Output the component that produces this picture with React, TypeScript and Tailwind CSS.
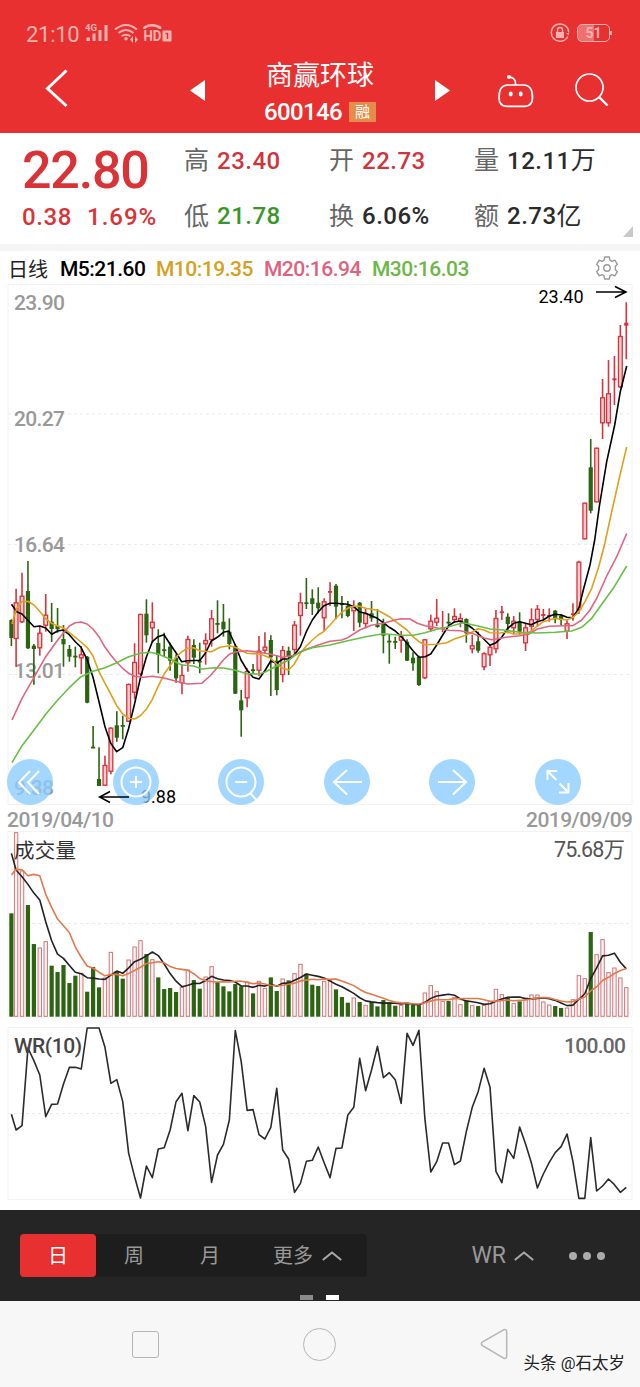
import React from 'react';

type Tone = 'r' | 'g';
type Candle = [tone: Tone, high: number, low: number, top: number, bottom: number];
type Point = [number, number];

const UP = '#d6333c';
const DOWN = '#2c6412';

const candles: Candle[] = [
  ['g', 619.3, 646, 620, 638], ['r', 588.7, 666.7, 602.3, 639], ['r', 572.7, 623, 595.7, 622.3],
  ['g', 561, 649, 591, 648.3], ['g', 644, 684.7, 645.7, 649], ['r', 627, 655.7, 632.7, 648.3],
  ['r', 594, 631.7, 614.7, 625.7], ['g', 603, 642, 621.7, 629], ['g', 608, 632.7, 626, 629.3],
  ['g', 625, 666.7, 639, 644.3], ['g', 645, 661.7, 649, 656.7], ['g', 646.7, 667.3, 655.7, 657],
  ['r', 646, 674, 654.3, 658.3], ['g', 656, 703.3, 656.7, 702.7], ['g', 726, 748, 746.7, 748],
  ['g', 747.3, 786, 779, 786], ['r', 755.7, 786, 765, 785.7], ['r', 727.3, 774.3, 727.7, 771.7],
  ['g', 711.3, 741.7, 725.3, 737.7], ['g', 715.7, 739.3, 725, 726.3], ['r', 683.5, 722, 684, 721.7],
  ['r', 643.3, 699.3, 662, 692.7], ['r', 613.7, 675, 614, 674.3], ['g', 599.3, 642.7, 613.7, 635.3],
  ['r', 602.3, 642.7, 621.7, 628.3], ['g', 629.3, 673.3, 643, 655], ['g', 632.7, 656, 649.3, 650.7],
  ['g', 642.7, 670.7, 646.7, 660.7], ['g', 654.3, 682.7, 657.7, 678.3], ['r', 664, 694.3, 675, 683.3],
  ['r', 635.7, 671.7, 639, 663.3], ['g', 639.3, 664, 645, 657.7], ['g', 642.7, 673.3, 660.7, 662.3],
  ['r', 633.3, 664.7, 640, 644.3], ['r', 610, 646.7, 618.3, 640], ['g', 600.3, 633.3, 623, 624.3],
  ['g', 604, 636.7, 621.7, 629.3], ['g', 618.3, 649.3, 631.7, 644], ['g', 644, 694, 646, 693.7],
  ['g', 690, 736.7, 700.3, 710.3], ['r', 668.3, 707.3, 671, 698.3], ['g', 664, 673.3, 669.3, 670.7],
  ['r', 636, 676, 650.7, 670.7], ['r', 632.3, 653.3, 646.7, 650.7], ['g', 635.3, 696, 640, 657.3],
  ['g', 655, 695.3, 660.7, 690], ['r', 646, 682.3, 650, 675], ['g', 646.7, 675, 650.7, 656.7],
  ['r', 621, 655, 624.7, 650], ['r', 592.7, 635.7, 602.3, 616], ['g', 578, 609, 602.3, 604],
  ['g', 589.3, 615, 598.3, 604], ['g', 587.3, 613.3, 602.7, 608.3], ['r', 598.3, 630.7, 601.3, 618.3],
  ['r', 582.3, 606, 591, 592.3], ['g', 584, 619.3, 585.7, 606.7], ['g', 596, 618.3, 603.3, 604.7],
  ['g', 601, 617.3, 605.7, 616], ['r', 600.3, 631, 606, 611.3], ['g', 602, 627.3, 602.7, 622.7],
  ['r', 608.3, 628.3, 613.3, 624], ['g', 601, 621.7, 613.3, 618.3], ['g', 609, 627.7, 625, 627],
  ['g', 618.7, 653.3, 623.3, 635.7], ['g', 634, 663.7, 640.7, 642], ['g', 636.7, 649, 641, 642.7],
  ['r', 631, 652.7, 636.3, 640.7], ['g', 639.3, 661, 641.7, 660.7], ['g', 652.3, 670.7, 657.7, 663.3],
  ['g', 655.7, 686, 656.7, 685], ['r', 639, 679, 639.3, 678.3], ['r', 614.7, 631.7, 620.7, 629.3],
  ['r', 599, 626, 617.7, 622.7], ['r', 611, 632.3, 627.3, 629], ['g', 613.3, 626.7, 621.7, 623.3],
  ['r', 608.3, 622.3, 616, 620], ['r', 613.3, 627.3, 618, 621.7], ['g', 618.3, 642.7, 619, 633.3],
  ['r', 635, 653.3, 645.3, 649.3], ['g', 631.7, 652.7, 641.3, 650.7], ['r', 652.3, 670.3, 653.3, 667.3],
  ['r', 645, 666, 646.7, 655.3], ['r', 610, 653.3, 618, 649.3], ['r', 606, 620, 611.3, 613],
  ['g', 613.3, 633.3, 616.7, 624], ['r', 616, 634.3, 620.7, 628.3], ['g', 612.3, 634.7, 621.7, 631.7],
  ['r', 623.3, 651, 627.3, 643.3], ['r', 608.3, 630.7, 619.3, 626.7], ['r', 605, 626.7, 608.7, 620],
  ['r', 609, 621, 614, 616], ['r', 608.3, 621.7, 615, 616.7], ['g', 610, 623.3, 610.7, 619.3],
  ['g', 614, 625.7, 616, 620], ['r', 620, 639, 623.3, 631.7], ['r', 603.3, 620.7, 613.3, 615],
  ['r', 560.7, 614, 561.7, 610], ['r', 502.7, 539.3, 502.7, 539.3], ['g', 439, 513.3, 467.3, 510.7],
  ['r', 447.7, 502.3, 447.7, 502.3], ['r', 379, 439, 397.3, 423.3], ['r', 360, 426.7, 393.3, 423.3],
  ['r', 356, 405, 378.3, 380.3], ['r', 325, 388.3, 336, 387.3], ['r', 302.3, 359.3, 322.7, 325.7],
];

const ma5: Point[] = [
  [11.5, 604.3], [16.7, 611.7], [22, 614], [34, 626.7], [40, 626], [45.7, 628], [51.7, 634.3], [57.7, 631],
  [63.3, 630], [69.3, 634.7], [75.3, 641.7], [81, 647.3], [87, 659.3], [93, 677.3], [99, 701.7], [105, 726.7],
  [110.7, 743.3], [116.7, 751.7], [122.7, 747.7], [128.7, 728.3], [134.7, 703.3], [140.3, 678.3], [146.3, 657.3],
  [152.3, 641.7], [158, 636.7], [164, 634.7], [170, 644], [176, 652.7], [181.7, 661.7], [187.7, 660.7],
  [200, 660.3], [205.3, 653.3], [211.3, 641], [217.3, 637.3], [223.3, 632.3], [228.7, 631], [235.3, 645],
  [241, 660], [247, 670], [253, 677.3], [259, 679], [264.7, 671], [270.7, 661], [276.7, 663.3], [282.7, 659],
  [288.7, 659], [294.3, 655], [300.3, 646.7], [306.3, 631.7], [312.3, 620], [318.3, 611.7], [324, 605.7],
  [330, 603.3], [336, 603.3], [347.7, 604.3], [353.7, 606.7], [359.7, 612], [365.7, 613.3], [371.3, 615.7],
  [377.3, 618.3], [383.3, 622.7], [389.3, 627.3], [395.3, 631], [401, 636.3], [407, 643.3], [413, 650.7],
  [419, 657.3], [425, 656.7], [430.7, 654], [436.7, 645], [442.7, 635], [448.7, 625.7], [454.3, 622],
  [460.3, 621], [466.3, 624], [472, 628], [478, 633.3], [484, 639.3], [490, 645.3], [496, 642.7],
  [501.7, 637.3], [507.7, 628.3], [513.7, 623.3], [519.7, 621.7], [531.3, 624.7], [537.3, 621.7], [543.3, 620],
  [549.3, 616], [555.3, 614.3], [561.3, 615], [567, 617.3], [573, 617.7], [579, 607.7], [583.3, 590],
  [590, 565], [594.7, 540], [599.3, 506.7], [606.7, 461.7], [614.7, 425], [620.3, 391.7], [626.7, 366],
];

const ma10: Point[] = [
  [12, 624], [16.7, 608.3], [22, 601.7], [28, 601.3], [34, 605], [40, 611.7], [45.7, 618.7], [51.7, 623.3],
  [57.7, 626], [63.3, 628], [69.3, 632.7], [75.3, 637.3], [81, 642], [87, 647.3], [93, 656], [99, 671.7],
  [105, 683.3], [110.7, 694], [116.7, 705.7], [122.7, 714], [128.7, 718.3], [134.7, 719], [140.3, 715.7],
  [146.3, 709.3], [152.3, 699.3], [158, 686.7], [164, 674.3], [170, 665.7], [176, 657.3], [181.7, 651.7],
  [187.7, 648.3], [193.7, 647.7], [200, 651], [211.3, 651.7], [220, 647.3], [229.3, 645.7], [235.3, 647.3],
  [241, 650.3], [247, 653.3], [259, 654], [264.7, 655.7], [270.7, 658.3], [276.7, 664.3], [282.7, 668.3],
  [288.7, 670], [294.3, 664], [300.3, 653.3], [306.3, 646], [312.3, 640], [318.3, 635], [324, 631.3],
  [330, 625], [336, 618.3], [341.7, 612.3], [347.7, 608.3], [353.7, 606.3], [359.7, 606.3], [365.7, 608.3],
  [377.3, 610.3], [383.3, 613.3], [389.3, 616.7], [395.3, 621.3], [407, 630], [413, 636.7], [420, 642.3],
  [425, 644.7], [436.7, 644.3], [446.7, 642.7], [454.3, 639], [466.3, 635], [472, 632.3], [478, 628.7],
  [484, 630], [490, 632.7], [500, 633], [507.7, 632], [513.7, 634], [525.7, 633.7], [531.3, 631], [537.3, 626],
  [543.3, 621.7], [549.3, 620], [555.3, 618.3], [561.3, 619.3], [567, 620], [573, 617.3], [579, 611.7],
  [585, 601.7], [591.7, 588.3], [598.3, 568.3], [604.7, 544], [611.7, 511.7], [620, 475], [626.7, 447],
];

const ma20: Point[] = [
  [12, 720], [22, 698.3], [34, 677.3], [45.7, 656.7], [57.7, 640], [69.3, 626], [75.3, 622.7], [81, 622],
  [87, 624], [93, 629], [99, 636.7], [105, 647.3], [110.7, 655], [116.7, 662.3], [122.7, 668.3], [128.7, 673.3],
  [134.7, 676.3], [143.3, 677.3], [152.3, 676.3], [164, 678], [176, 681.3], [187.7, 684], [201.7, 683.3],
  [210, 676], [216.7, 668.3], [223.3, 660], [229.3, 654.3], [235.3, 652], [247, 650.7], [259, 652.3],
  [270.7, 654.3], [282.7, 657.3], [294.3, 655.3], [306.3, 649.3], [318.3, 645], [330, 641.3], [341.7, 640],
  [347.7, 637.7], [359.7, 630], [371.3, 625.3], [383.3, 623.3], [395.3, 620], [401, 618.7], [410, 619],
  [417.3, 623.3], [425, 625.7], [433.3, 627.3], [448.7, 630.3], [460.3, 630.7], [472, 633.3], [484, 638],
  [491.7, 639.7], [507.7, 637], [519.7, 635.7], [528.3, 634.3], [537.3, 629], [549.3, 626.3], [563.3, 625.7],
  [573, 625.7], [581.7, 620], [590, 610], [596.7, 598.3], [606.7, 576], [616.7, 556.7], [626.7, 533.5],
];

const ma30: Point[] = [
  [12, 762.7], [22, 745.7], [34, 730], [45.7, 714.3], [57.7, 700], [69.3, 687.7], [81, 676.7], [93, 671.3],
  [105, 667.7], [116.7, 662.7], [128.7, 656.7], [140.3, 653.3], [150, 652.3], [158, 654], [170, 659],
  [181.7, 665], [193.7, 666], [201.7, 669], [215, 667.7], [223.3, 668], [235.3, 670.3], [247, 673.7],
  [259, 674], [264.7, 672.3], [276.7, 666], [288.7, 660], [300.3, 651.7], [312.3, 647.7], [330, 645],
  [347.7, 640.7], [365.7, 636.7], [383.3, 633.7], [401, 635.3], [413.3, 635.3], [425, 632.7], [436.7, 629.3],
  [448.7, 626.7], [463.3, 622.7], [478, 626], [490, 629], [503.3, 630], [519.7, 632.3], [537.3, 633],
  [555.3, 632.3], [571.7, 631], [581.7, 627.3], [591.7, 618.3], [601.7, 604.3], [613.3, 588.3], [626.7, 566],
];

const volumes = [
  310, 553, 438, 335, 218, 207, 226, 153, 134, 155, 101, 123, 131, 75, 149, 88, 117, 194, 137, 114, 171, 210,
  229, 188, 172, 118, 83, 86, 74, 89, 141, 110, 84, 120, 151, 104, 91, 76, 98, 91, 105, 70, 107, 86, 118, 77,
  114, 109, 130, 158, 129, 96, 92, 107, 110, 82, 59, 42, 57, 44, 35, 44, 31, 50, 43, 33, 35, 40, 35, 34, 72,
  94, 76, 47, 47, 59, 37, 47, 34, 32, 35, 47, 83, 67, 58, 40, 46, 57, 66, 66, 45, 36, 32, 26, 27, 52, 124,
  115, 254, 187, 232, 133, 147, 117, 88,
];

const wr = [
  283, 330, 317, 84, 122, 165, 290, 253, 252, 192, 142, 142, 147, 24, 24, 24, 82, 190, 179, 245, 400, 470, 534,
  438, 473, 387, 383, 330, 245, 220, 332, 227, 246, 320, 487, 405, 373, 300, 32, 125, 271, 269, 344, 357, 322,
  205, 390, 417, 517, 490, 424, 421, 381, 428, 473, 385, 384, 285, 262, 115, 212, 150, 79, 173, 158, 179, 250,
  40, 76, 31, 295, 456, 425, 369, 369, 434, 423, 335, 262, 215, 145, 202, 454, 488, 388, 415, 321, 372, 430,
  504, 462, 427, 398, 380, 342, 425, 535, 535, 353, 513, 498, 477, 494, 517, 502,
];

const xAt = (i: number) => (i === 0 ? 11.4 : 16.1 + (i - 1) * 5.924);

const toPoints = (pts: Point[]) => pts.map((p) => p.join(',')).join(' ');

// first values come from days before the visible range
const average = (n: number, seed: number[]): Point[] =>
  volumes.map((_, i) => {
    const v = i < seed.length ? seed[i] : volumes.slice(i - n + 1, i + 1).reduce((a, b) => a + b, 0) / n;
    return [xAt(i), 1016.7 - v / 3];
  });

const volMa5 = average(5, [490, 440, 420, 397]);
const volMa10 = average(10, [425, 442, 441, 423, 427, 423, 367, 328, 293]);

const Line: React.FC<{ pts: Point[]; color: string; width?: number }> = ({ pts, color, width = 1.6 }) => (
  <polyline points={toPoints(pts)} fill="none" stroke={color} strokeWidth={width} strokeLinejoin="round" />
);

const Grid: React.FC<{ y: number }> = ({ y }) => (
  <line x1="8" x2="632" y1={y} y2={y} stroke="#ebebeb" strokeDasharray="3 3" />
);

const StatusBar = () => (
  <div className="flex h-[54px] items-end justify-between pr-7 pl-[26px] text-[#f9b3b0]">
    <div className="flex h-[42px] items-center">
      <span className="w-[59px] pt-[3px] text-[22px] leading-none tracking-[-0.3px]">21:10</span>
      <svg width="90" height="24" viewBox="85 21 90 24" fill="currentColor">
        <text x="85" y="31" fontSize="8.5" fontWeight="700" textLength="12" lengthAdjust="spacingAndGlyphs">4G</text>
        <rect x="86.5" y="37.5" width="3.5" height="3.5" />
        <rect x="92.5" y="33.5" width="3" height="7.5" />
        <rect x="98.5" y="30" width="3" height="11" />
        <rect x="104.5" y="25" width="3" height="16" />
        <g fill="none" stroke="currentColor" strokeWidth="2">
          <path d="M115 29.5Q126 20.5 137 29.5" />
          <path d="M118.5 33Q126 27 133.5 33" />
          <path d="M121.5 36.3Q126 33 130.5 36.3" />
        </g>
        <circle cx="126" cy="38.8" r="1.7" />
        <path d="M130 39.5l3-3.5v7zM138 39.5l-3-3.5v7z" />
        <path d="M144.5 29v-1.5q7.5-4.5 15.5 0V29" fill="none" stroke="currentColor" strokeWidth="2.6" />
        <text x="143.5" y="41.3" fontSize="15" fontWeight="700" textLength="18" lengthAdjust="spacingAndGlyphs">HD</text>
        <rect x="162.5" y="30.5" width="9" height="11" rx="1" />
        <path d="M165.500 33.500h2v5.500" fill="none" stroke="#e93030" strokeWidth="1.5" />
      </svg>
    </div>
    <div className="flex h-[42px] items-center gap-[7px]">
      <svg width="20" height="20" viewBox="0 0 20 20" fill="none" stroke="currentColor" strokeWidth="1.5">
        <path d="M17.8 13.5A8.7 8.7 0 1 1 18.7 9.5" />
        <rect x="6" y="9" width="8" height="6" fill="currentColor" stroke="none" />
        <path d="M7.5 9V7a2.5 2.5 0 0 1 5 0v2" />
        <path d="M16 10h3l-.5 2.5z" fill="currentColor" stroke="none" />
      </svg>
      <div className="flex items-center">
        <span className="flex h-[18px] w-[33px] items-center justify-center rounded-[5px] border-[1.5px] border-[#f9b3b0] bg-linear-to-r from-[#f0706f] from-50% to-transparent to-50% text-sm leading-none font-bold">
          51
        </span>
        <span className="h-1 w-0.5 bg-[#f9b3b0]" />
      </div>
    </div>
  </div>
);

const TitleBar = () => (
  <div className="flex h-[79px] items-start text-white">
    <svg className="mt-[14px] ml-[44px]" width="26" height="42" viewBox="44 68 26 42" fill="none" stroke="currentColor" strokeWidth="3">
      <path d="M66.5 70.500L47.500 88.500l19 17.500" />
    </svg>
    <svg className="mt-[26px] ml-[120px]" width="15" height="21" viewBox="0 0 15 21">
      <path d="M15 0v21L0 10.500z" fill="currentColor" />
    </svg>
    <div className="ml-[15px] flex w-[200px] flex-col items-center">
      <h1 className="mt-[6px] h-[32px] text-[27px] leading-[32px]">商赢环球</h1>
      <div className="mt-[7px] flex h-[26px] items-center gap-[7px]">
        <span className="text-[24px] leading-none font-medium tracking-[-0.6px]">600146</span>
        <span className="flex h-5 w-[27px] items-center justify-center bg-[#e78b4b] text-[15px] leading-none">融</span>
      </div>
    </div>
    <svg className="mt-[26px] ml-[15px]" width="15" height="21" viewBox="0 0 15 21">
      <path d="M0 0v21l15-10.500z" fill="currentColor" />
    </svg>
    <svg className="mt-[18px] ml-[46px]" width="40" height="38" viewBox="496 72 40 38" fill="none" stroke="currentColor" strokeWidth="1.7">
      <path d="M508 85h15.500c6 0 9 5 9 12.500 0 6-2.500 8.800-8 8.800H507c-5.500 0-8-2.800-8-8.800C499 90 502 85 508 85z" />
      <path d="M515.5 85v-2q0-5-6-6" />
      <circle cx="509" cy="77" r="2" fill="currentColor" stroke="none" />
      <ellipse cx="510.7" cy="94" rx="2" ry="2.4" fill="currentColor" stroke="none" />
      <ellipse cx="520.7" cy="94" rx="2" ry="2.4" fill="currentColor" stroke="none" />
    </svg>
    <svg className="mt-[18px] ml-[37px]" width="38" height="38" viewBox="573 72 38 38" fill="none" stroke="currentColor" strokeWidth="1.7">
      <circle cx="589.5" cy="87.5" r="13.5" />
      <path d="M599 97l8.500 8.500" strokeWidth="2.4" />
    </svg>
  </div>
);

const Stat: React.FC<{ label: string; value: string; unit?: string; color?: string }> = ({
  label, value, unit, color = 'text-[#2b2b2b]',
}) => (
  <div className="flex h-[55.5px] items-center gap-2 leading-none">
    <span className="text-[25px] text-[#666]">{label}</span>
    <span className={`flex items-center text-[24px] font-medium tracking-[0.5px] ${color}`}>
      {value}
      {unit && <span className="text-[25px] font-normal">{unit}</span>}
    </span>
  </div>
);

const Quote = () => (
  <section className="relative flex h-[111px] bg-white">
    <div className="w-[184px] pt-2 pl-[22px] text-[#d93338]">
      <div className="h-[58px] text-[52px] leading-[60px] font-medium tracking-[-1.2px]">22.80</div>
      <div className="flex h-[35px] items-center gap-[15px] text-[24px] font-medium">
        <span className="tracking-[0.6px]">0.38</span>
        <span className="tracking-[1px]">1.69%</span>
      </div>
    </div>
    <div className="grid grid-cols-[145px_145px_150px]">
      <Stat label="高" value="23.40" color="text-[#d0343c]" />
      <Stat label="开" value="22.73" color="text-[#d0343c]" />
      <Stat label="量" value="12.11" unit="万" />
      <Stat label="低" value="21.78" color="text-[#3a962a]" />
      <Stat label="换" value="6.06%" />
      <Stat label="额" value="2.73" unit="亿" />
    </div>
    <svg className="absolute right-[7px] bottom-[7px]" width="10" height="11" viewBox="0 0 10 11">
      <path d="M10 0v11H0z" fill="#c9c9c9" />
    </svg>
  </section>
);

const Legend = () => (
  <div className="flex h-[33px] items-center pt-1 pr-5 pl-2 text-[21px] font-medium tracking-[-0.5px] whitespace-nowrap">
    <span className="w-[52px] text-[20px] font-normal tracking-normal text-[#222]">日线</span>
    <span className="w-[96px] text-black">M5:21.60</span>
    <span className="w-[108px] text-[#d7a021]">M10:19.35</span>
    <span className="w-[108px] text-[#e1607b]">M20:16.94</span>
    <span className="text-[#6cb748]">M30:16.03</span>
    <svg className="mb-[3px] ml-auto" width="26" height="26" viewBox="0 0 26 26" fill="none" stroke="#999" strokeWidth="1.4" strokeLinejoin="round">
      <path d="M10.700 2h4.600l.6 3.200 2 1.200 2.900-1.200 2.600 4.100-2 2v3.400l2 2-2.600 4.100-2.900-1.200-2 1.200-.6 3.200h-4.600l-.6-3.200-2-1.200-2.900 1.200-2.600-4.100 2-2v-3.400l-2-2 2.600-4.100 2.900 1.200 2-1.200z" />
      <circle cx="13" cy="13" r="3.2" />
    </svg>
  </div>
);

const actions = [
  <path d="M23 12L12 23.500 23 35M32 12L21 23.500 32 35" />,
  <>
    <circle cx="23" cy="23" r="14.5" />
    <path d="M17 23h12M23 17v12" />
  </>,
  <>
    <circle cx="23" cy="23" r="14.5" />
    <path d="M17 23h12M32.500 34.500l6 6.500" />
  </>,
  <path d="M38 23H10M23 11L10 23l13 12.500" />,
  <path d="M9 23h28M24 11l13 12-13 12.500" />,
  <path d="M12.500 21v-9h9.500M12.500 12l9 9M24.500 24.500l9 9M24 33.500h9.500V24" />,
];

const PriceChart = () => (
  <section className="relative h-[547px]">
    <svg width="640" height="547" viewBox="0 284 640 547">
      <rect x="8" y="284.5" width="624" height="520" fill="none" stroke="#f2f2f2" />
      <Grid y={414} />
      <Grid y={544.5} />
      <Grid y={674.5} />
      <g fontSize="21" fontWeight="500" fill="#999">
        <text x="14" y="309.5" textLength="51">23.90</text>
        <text x="14" y="426" textLength="51">20.27</text>
        <text x="14" y="552" textLength="51">16.64</text>
        <text x="14" y="678" textLength="51">13.01</text>
        <text x="14" y="794.5" textLength="40">9.38</text>
        <text x="7" y="827" textLength="107">2019/04/10</text>
        <text x="526" y="827" textLength="107">2019/09/09</text>
      </g>
      {candles.map(([tone, high, low, top, bottom], i) => {
        const color = tone === 'r' ? UP : DOWN;
        const x = xAt(i);
        const hollow = tone === 'r' && bottom - top > 3;
        return (
          <g key={i}>
            <line x1={x} x2={x} y1={high} y2={low} stroke={color} strokeWidth="1.6" />
            {hollow ? (
              <rect x={x - 1.9} y={top + 0.5} width="3.8" height={bottom - top - 1} fill="#f7cdce" stroke={color} strokeWidth="1.3" />
            ) : (
              <rect x={x - 2.1} y={top} width="4.2" height={Math.max(bottom - top, 1.8)} fill={color} />
            )}
          </g>
        );
      })}
      <Line pts={ma5} color="#000" />
      <Line pts={ma10} color="#dfa01c" />
      <Line pts={ma20} color="#e2647f" />
      <Line pts={ma30} color="#68bf48" />
      <g fontSize="18" fill="#000">
        <text x="538.5" y="302.5" textLength="45">23.40</text>
        <text x="141" y="803" textLength="35">9.88</text>
      </g>
      <path d="M596 292h29M615 286.500l11 5.500-11 5.500" fill="none" stroke="#000" strokeWidth="1.5" />
    </svg>
    <div className="absolute top-[475px] left-[7px] flex gap-[59.5px]">
      {actions.map((icon, i) => (
        <button key={i} className="size-[46px] rounded-full bg-[#8bccff]/78">
          <svg width="46" height="46" viewBox="0 0 46 46" fill="none" stroke="#fff" strokeWidth="2">
            {icon}
          </svg>
        </button>
      ))}
    </div>
    <svg className="absolute top-[506px] left-[98px]" width="32" height="14" viewBox="0 0 32 14">
      <path d="M31 7H2M12 1.500L1.500 7 12 12.500" fill="none" stroke="#000" strokeWidth="1.5" />
    </svg>
  </section>
);

const VolumeChart = () => (
  <svg className="block" width="640" height="190" viewBox="0 831 640 190">
    <rect x="8" y="831.5" width="624" height="185.5" fill="none" stroke="#f2f2f2" />
    <Grid y={923.5} />
    {volumes.map((v, i) => {
      const h = v / 3;
      const x = xAt(i);
      return candles[i][0] === 'r' ? (
        <rect key={i} x={x - 1.7} y={1017 - h} width="3.4" height={h - 0.7} fill="#fff5f5" stroke="#cf767a" />
      ) : (
        <rect key={i} x={x - 2.1} y={1016.7 - h} width="4.2" height={h} fill={DOWN} />
      );
    })}
    <Line pts={volMa5} color="#222" />
    <Line pts={volMa10} color="#e5784a" />
    <text x="14" y="857.5" fontSize="20.5" fill="#333" textLength="62">成交量</text>
    <text x="554" y="857" fontSize="21.5" fill="#555" textLength="71">75.68万</text>
  </svg>
);

const WrChart = () => (
  <svg className="block" width="640" height="189" viewBox="0 1021 640 189">
    <rect x="8" y="1027.5" width="624" height="172" fill="none" stroke="#f2f2f2" />
    <Grid y={1113.5} />
    <Line pts={wr.map((v, i): Point => [xAt(i), 1020 + v / 3])} color="#2b2b2b" />
    <text x="14" y="1052.5" fontSize="21" fontWeight="500" fill="#444" textLength="68">WR(10)</text>
    <text x="564" y="1052.5" fontSize="21" fontWeight="500" fill="#666" textLength="62">100.00</text>
  </svg>
);

const Chevron = () => (
  <svg width="20" height="10" viewBox="0 0 20 10" fill="none" stroke="#aaa" strokeWidth="2">
    <path d="M.8 9L10 1.500 19.200 9" />
  </svg>
);

const Toolbar = () => (
  <div className="relative flex h-[91px] items-center justify-between bg-[#252525] pr-[35px] pl-5 text-[20px] text-[#999]">
    <div className="flex h-[43px] w-[347px] items-center rounded bg-[#1d1d1d]">
      <span className="flex h-full w-[76px] items-center justify-center rounded bg-[#e93030] text-white">日</span>
      <span className="w-[76px] text-center">周</span>
      <span className="w-[76px] text-center">月</span>
      <span className="ml-[25px] flex items-center gap-[9px]">更多 <Chevron /></span>
    </div>
    <div className="flex items-center">
      <span className="mr-2 pt-0.5 text-[23px]">WR</span>
      <Chevron />
      <div className="ml-[35px] flex gap-1.5">
        <span className="size-2 rounded-full bg-[#aaa]" />
        <span className="size-2 rounded-full bg-[#aaa]" />
        <span className="size-2 rounded-full bg-[#aaa]" />
      </div>
    </div>
    <div className="absolute bottom-px left-[300px] flex gap-[13px]">
      <span className="h-[5px] w-[13px] bg-[#8a8a8a]" />
      <span className="h-[5px] w-[13px] bg-white" />
    </div>
  </div>
);

const SystemNav = () => (
  <div className="relative flex h-[86px] items-center justify-between bg-[#f7f7f7] pr-[132px] pl-[132px]">
    <span className="size-[27px] rounded-[3px] border-[1.5px] border-[#b5b5b5]" />
    <span className="size-[33px] rounded-full border-[1.5px] border-[#b5b5b5]" />
    <svg width="28" height="32" viewBox="0 0 28 32" fill="none" stroke="#b5b5b5" strokeWidth="1.5">
      <path d="M24 1.700L2.200 14.200q-1.800 1.600 0 3.300L24 30.300q2.500.8 2.700-2V3.700q-.2-2.800-2.700-2z" />
    </svg>
    <span className="absolute right-[15px] bottom-[13px] text-[16.5px] leading-5 text-[#222] [text-shadow:1px_1px_0_#fff]">头条 @石太岁</span>
  </div>
);

const App: React.FC = () => {
  return (
    <div className="w-[640px] bg-white font-[Roboto,'Noto_Sans_CJK_SC',sans-serif]">
      <header className="h-[133px] bg-[#e93030]">
        <StatusBar />
        <TitleBar />
      </header>
      <Quote />
      <div className="h-[7px] bg-[#f5f5f5]" />
      <Legend />
      <PriceChart />
      <VolumeChart />
      <WrChart />
      <Toolbar />
      <SystemNav />
    </div>
  );
};

export default App;
